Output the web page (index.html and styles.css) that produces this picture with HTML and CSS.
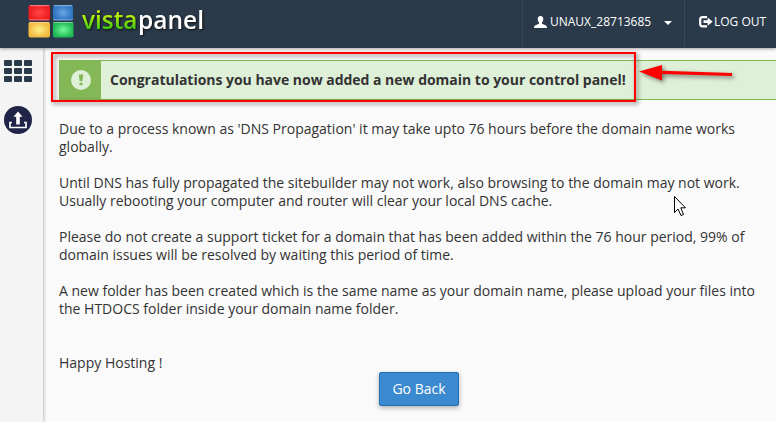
FILE: index.html
```html
<!DOCTYPE html>
<html lang="en">
<head>
    <meta charset="UTF-8">
    <meta name="viewport" content="width=device-width, initial-scale=1.0">
    <title>VistaPanel</title>
    <link rel="stylesheet" href="styles.css">
</head>
<body>
    <header class="navbar">
        <svg class="logo" width="190" height="48" viewBox="0 0 190 48">
            <defs>
                <radialGradient id="red"><stop offset="0" stop-color="#ff4848"/><stop offset="1" stop-color="#ee1c20"/></radialGradient>
                <radialGradient id="blue"><stop offset="0" stop-color="#6aa8e6"/><stop offset="1" stop-color="#2d73bf"/></radialGradient>
                <radialGradient id="yellow"><stop offset="0" stop-color="#fff08c"/><stop offset="1" stop-color="#f2b93f"/></radialGradient>
                <radialGradient id="green"><stop offset="0" stop-color="#72fa98"/><stop offset="1" stop-color="#1fb856"/></radialGradient>
                <linearGradient id="lime" x1="0" y1="0" x2="0" y2="1"><stop offset="0.35" stop-color="#c6f011"/><stop offset="0.8" stop-color="#3ccc0c"/></linearGradient>
            </defs>
            <rect x="8.500" y="5" width="21.500" height="15.500" rx="2" fill="url(#red)"/>
            <rect x="33" y="5" width="20" height="15.500" rx="2" fill="url(#blue)"/>
            <rect x="8.500" y="22" width="21.500" height="15.500" rx="2" fill="url(#yellow)"/>
            <rect x="33" y="22" width="20.500" height="15.500" rx="2" fill="url(#green)"/>
            <path d="M10 5.700h19M34 5.700h18" stroke="#fff" stroke-opacity="0.5"/>
            <path d="M9 19.800h20M33 19.800h20M9 22.500h20M33 22.500h20" stroke="#fff" stroke-opacity="0.4"/>
            <text class="logo-text" x="62" y="29" textLength="55.500" lengthAdjust="spacingAndGlyphs" fill="url(#lime)">vista</text>
            <text class="logo-text" x="118" y="29" textLength="66" lengthAdjust="spacingAndGlyphs" fill="#fff">panel</text>
        </svg>
        <div class="nav-item user">
            <svg width="13" height="12" viewBox="0 0 13 12"><path fill="#fff" d="M6.500 0C8.500 0 9.400 1.300 9.300 3.200C9.200 4.800 8.500 5.800 8 6.500V7.800L11.500 9.300C12.600 9.800 13 10.500 13 12H0C0 10.500.4 9.800 1.500 9.300L5 7.800V6.500C4.500 5.800 3.800 4.800 3.700 3.200C3.600 1.300 4.500 0 6.500 0Z"/></svg>
            <span class="user-name">UNAUX_28713685</span>
            <span class="caret"></span>
        </div>
        <div class="nav-item logout">
            <svg width="14" height="12" viewBox="0 0 14 12"><path d="M8 1.200H3.500Q1.200 1.200 1.200 3.500V8Q1.200 10.300 3.500 10.300H8" fill="none" stroke="#fff" stroke-width="2.200"/><path fill="#fff" d="M4.500 4.300H8.700V1.600L13.600 5.700L8.700 9.800V7.100H4.500Z"/></svg>
            <span>LOG OUT</span>
        </div>
    </header>
    <div class="wrapper">
        <aside class="sidebar">
            <svg width="28" height="22" viewBox="0 0 28 22" fill="#2a3a4a">
                <rect width="8" height="6" rx="1"/><rect x="10" width="8" height="6" rx="1"/><rect x="20" width="8" height="6" rx="1"/>
                <rect y="8" width="8" height="6" rx="1"/><rect x="10" y="8" width="8" height="6" rx="1"/><rect x="20" y="8" width="8" height="6" rx="1"/>
                <rect y="16" width="8" height="6" rx="1"/><rect x="10" y="16" width="8" height="6" rx="1"/><rect x="20" y="16" width="8" height="6" rx="1"/>
            </svg>
            <svg width="28" height="28" viewBox="0 0 28 28">
                <circle cx="14" cy="14" r="14" fill="#202447"/>
                <path d="M8 16.500H6V21.500H22V16.500H20" fill="none" stroke="#fff" stroke-width="1.700"/>
                <path d="M14 5.500L18.500 10.800H15.800V18.500H12.200V10.800H9.500Z" fill="#fff"/>
            </svg>
        </aside>
        <main class="content">
            <div class="alert">
                <div class="alert-icon">
                    <svg width="20" height="20" viewBox="0 0 20 20"><circle cx="10" cy="10" r="10" fill="#dff0d8"/><path d="M7.700 4.500H12.300L11.300 11.300H8.700ZM8.500 12.700H11.500V15.300H8.500Z" fill="#84b756"/></svg>
                </div>
                <strong class="alert-text">Congratulations you have now added a new domain to your control panel!</strong>
            </div>
            <div class="message">
                <p>Due to a process known as 'DNS Propagation' it may take upto 76 hours before the domain name works<br>globally.</p>
                <p>Until DNS has fully propagated the sitebuilder may not work, also browsing to the domain may not work.<br>Usually rebooting your computer and router will clear your local DNS cache.</p>
                <p>Please do not create a support ticket for a domain that has been added within the 76 hour period, 99% of<br>domain issues will be resolved by waiting this period of time.</p>
                <p>A new folder has been created which is the same name as your domain name, please upload your files into<br>the HTDOCS folder inside your domain name folder.</p>
                <p class="sign-off">Happy Hosting !</p>
            </div>
            <button class="btn" type="button">Go Back</button>
        </main>
    </div>

    <div class="highlight"></div>
    <svg class="arrow" width="110" height="34" viewBox="0 0 110 34">
        <path d="M4 15.500L27 9V14.800L97 17V20L27 18V24.500Z" fill="#f00"/>
    </svg>
    <svg class="cursor" width="14" height="22" viewBox="0 0 14 22">
        <path d="M1.500 1.500V17.500L5 14L8 20.500L10.500 19.500L7.800 12.800H12.500Z" fill="#fff" stroke="#000"/>
    </svg>
</body>
</html>
```
FILE: styles.css
```css
* {
    box-sizing: border-box;
}
body {
    margin: 0;
    height: 422px;
    overflow: hidden;
    position: relative;
    display: flex;
    flex-direction: column;
    background-color: #fafafa;
    color: #333;
    font-family: "Open Sans", sans-serif;
    font-size: 14px;
    line-height: 18px;
}
svg {
    display: block;
    flex: none;
}
.navbar {
    display: flex;
    height: 48px;
    flex: none;
    padding-left: 20px;
    background-color: #2a3a4a;
    color: #fff;
    box-shadow: 0 1px 3px rgba(0, 0, 0, 0.35);
    z-index: 1;
}
.logo {
    margin-right: auto;
}
.logo-text {
    font-family: "Open Sans", sans-serif;
    font-size: 25px;
    font-weight: 600;
    filter: drop-shadow(1px 1px 1px #111);
}
.nav-item {
    display: flex;
    align-items: center;
    height: 47px;
    border-left: 1px solid #37495b;
    font-size: 12px;
    white-space: nowrap;
}
.user {
    width: 162px;
    padding-left: 11px;
    gap: 3px;
    padding-bottom: 3px;
}
.user-name {
    width: 111px;
}
.caret {
    border: 4px solid transparent;
    border-top-color: #fff;
    border-bottom: 0;
    margin-top: 2px;
}
.logout {
    width: 92px;
    padding-left: 14px;
    padding-bottom: 4px;
    gap: 1px;
}
.wrapper {
    display: flex;
    flex: 1;
}
.sidebar {
    display: flex;
    flex-direction: column;
    gap: 24px;
    width: 43px;
    padding: 12px 0 0 4px;
    background-color: #f4f4f4;
    box-shadow: 1px 0 3px rgba(0, 0, 0, 0.25);
}
.content {
    display: flex;
    flex-direction: column;
    flex: 1;
    padding: 12px 0 0 16px;
    white-space: nowrap;
}
.alert {
    display: flex;
    height: 40px;
    background-color: #dff0d8;
    border: 1px solid #84b756;
    border-right: 0;
}
.alert-icon {
    display: flex;
    align-items: center;
    justify-content: center;
    width: 41px;
    background-color: #84b756;
}
.alert-text {
    padding: 10px 9px;
    letter-spacing: -0.02px;
}
.message {
    padding-top: 20px;
}
.message p {
    margin: 0 0 18px;
}
.message .sign-off {
    margin: 36px 0 0;
}
.btn {
    width: 80px;
    height: 34px;
    margin-left: 320px;
    padding: 0 0 2px;
    background-color: #3b8ad0;
    border: 1px solid #2270b5;
    border-radius: 2px;
    color: #fff;
    font: 14px "Open Sans", sans-serif;
    box-shadow: 0 2px 5px rgba(0, 0, 0, 0.3);
}
/* annotations over the page */
.highlight {
    position: absolute;
    left: 51px;
    top: 52px;
    width: 585px;
    height: 50px;
    border: 2px solid #f00;
    z-index: 2;
    filter: drop-shadow(2px 2px 2px rgba(0, 0, 0, 0.5));
}
.arrow {
    position: absolute;
    left: 635px;
    top: 56px;
    z-index: 2;
    filter: drop-shadow(2px 2px 2px rgba(0, 0, 0, 0.5));
}
.cursor {
    position: absolute;
    left: 673px;
    top: 195px;
}
```
